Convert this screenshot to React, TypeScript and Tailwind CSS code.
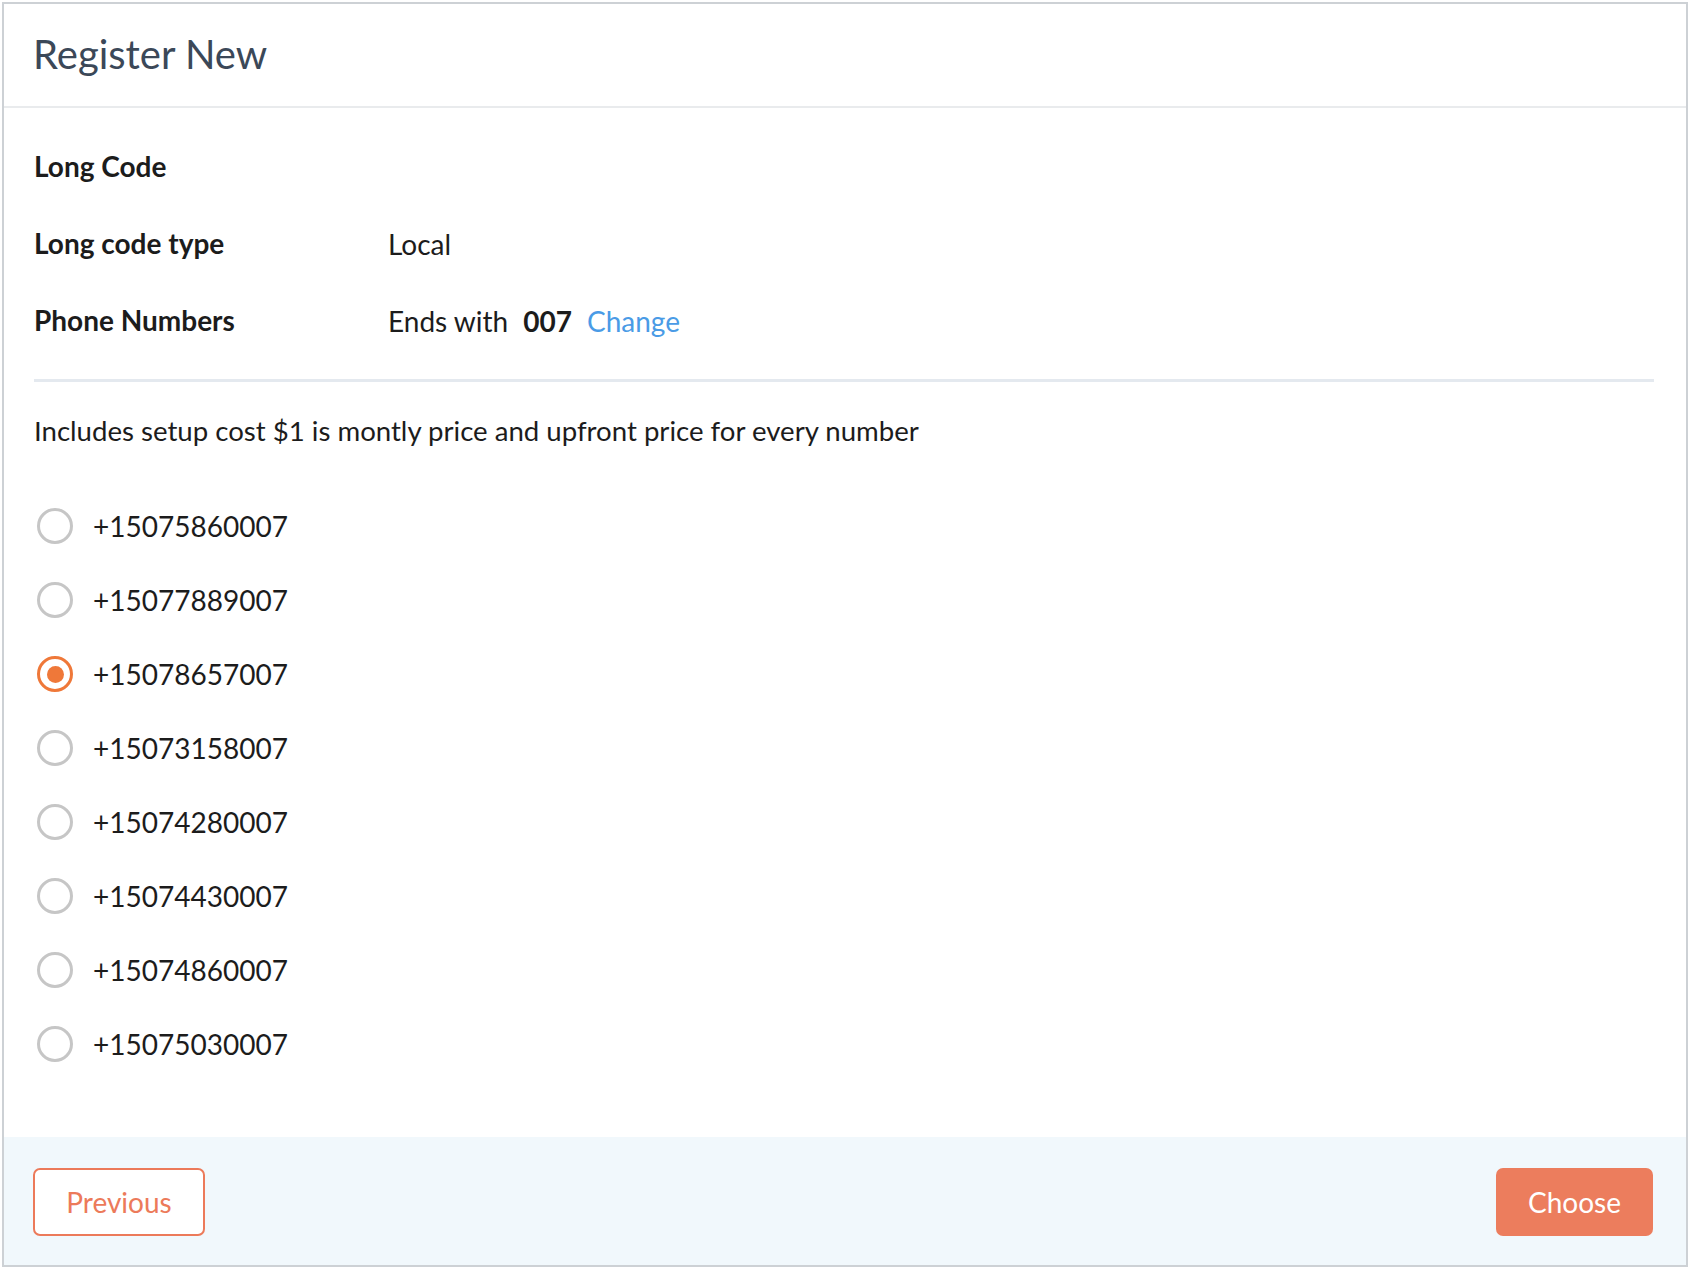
const numbers = [
  '+15075860007',
  '+15077889007',
  '+15078657007',
  '+15073158007',
  '+15074280007',
  '+15074430007',
  '+15074860007',
  '+15075030007',
]

function Radio({ checked }: { checked: boolean }) {
  return checked ? (
    <span className="flex h-[36px] w-[36px] shrink-0 items-center justify-center rounded-full border-[3px] border-[#ef7839]">
      <span className="h-[17px] w-[17px] rounded-full bg-[#ef7839]" />
    </span>
  ) : (
    <span className="h-[36px] w-[36px] shrink-0 rounded-full border-[3px] border-[#c6c6c6]" />
  )
}

export default function App() {
  const selected = 2
  return (
    <div className="h-[1270px] w-[1690px] bg-white p-[2px] font-['Lato','Noto_Sans',sans-serif] text-[#1c1c1c]">
      <div className="flex h-[1265px] w-[1686px] flex-col border-2 border-[#cdd1d5] bg-white">
        <header className="flex h-[104px] items-center border-b-2 border-[#e9ebed] px-[29px]">
          <h1 className="pb-[2px] text-[40px] leading-none text-[#3b4858]">Register New</h1>
        </header>

        <div className="flex-1 pl-[30px] pr-[32px] pt-[19px]">
          <div className="flex h-[77px] items-center">
            <span className="text-[28px] font-bold">Long Code</span>
          </div>
          <div className="flex h-[77px] items-center">
            <span className="w-[354px] text-[28px] font-bold">Long code type</span>
            <span className="pt-[3px] text-[28px]">Local</span>
          </div>
          <div className="flex h-[77px] items-center">
            <span className="w-[354px] text-[28px] font-bold">Phone Numbers</span>
            <span className="flex items-center gap-[15px] pt-[3px] text-[28px]">
              <span>Ends with</span>
              <span className="font-bold">007</span>
              <span className="text-[#4a9be6]">Change</span>
            </span>
          </div>

          <div className="mt-[21px] h-[3px] bg-[#e4e9ef]" />

          <p className="mt-[29px] text-[27.6px] leading-[40px]">
            Includes setup cost $1 is montly price and upfront price for every number
          </p>

          <ul className="mt-[38px]">
            {numbers.map((n, i) => (
              <li key={n} className="flex h-[74px] items-center gap-[20px] pl-[3px]">
                <Radio checked={i === selected} />
                <span className="text-[28px]">{n}</span>
              </li>
            ))}
          </ul>
        </div>

        <footer className="flex h-[128px] items-center justify-between bg-[#f1f8fc] pl-[29px] pr-[33px] pt-[2px]">
          <button
            type="button"
            className="h-[68px] w-[172px] rounded-[7px] border-2 border-[#ec7a5a] bg-white text-[28px] text-[#ec7a5a]"
          >
            Previous
          </button>
          <button
            type="button"
            className="h-[68px] w-[157px] rounded-[7px] bg-[#ec7d5d] text-[28px] text-white"
          >
            Choose
          </button>
        </footer>
      </div>
    </div>
  )
}
